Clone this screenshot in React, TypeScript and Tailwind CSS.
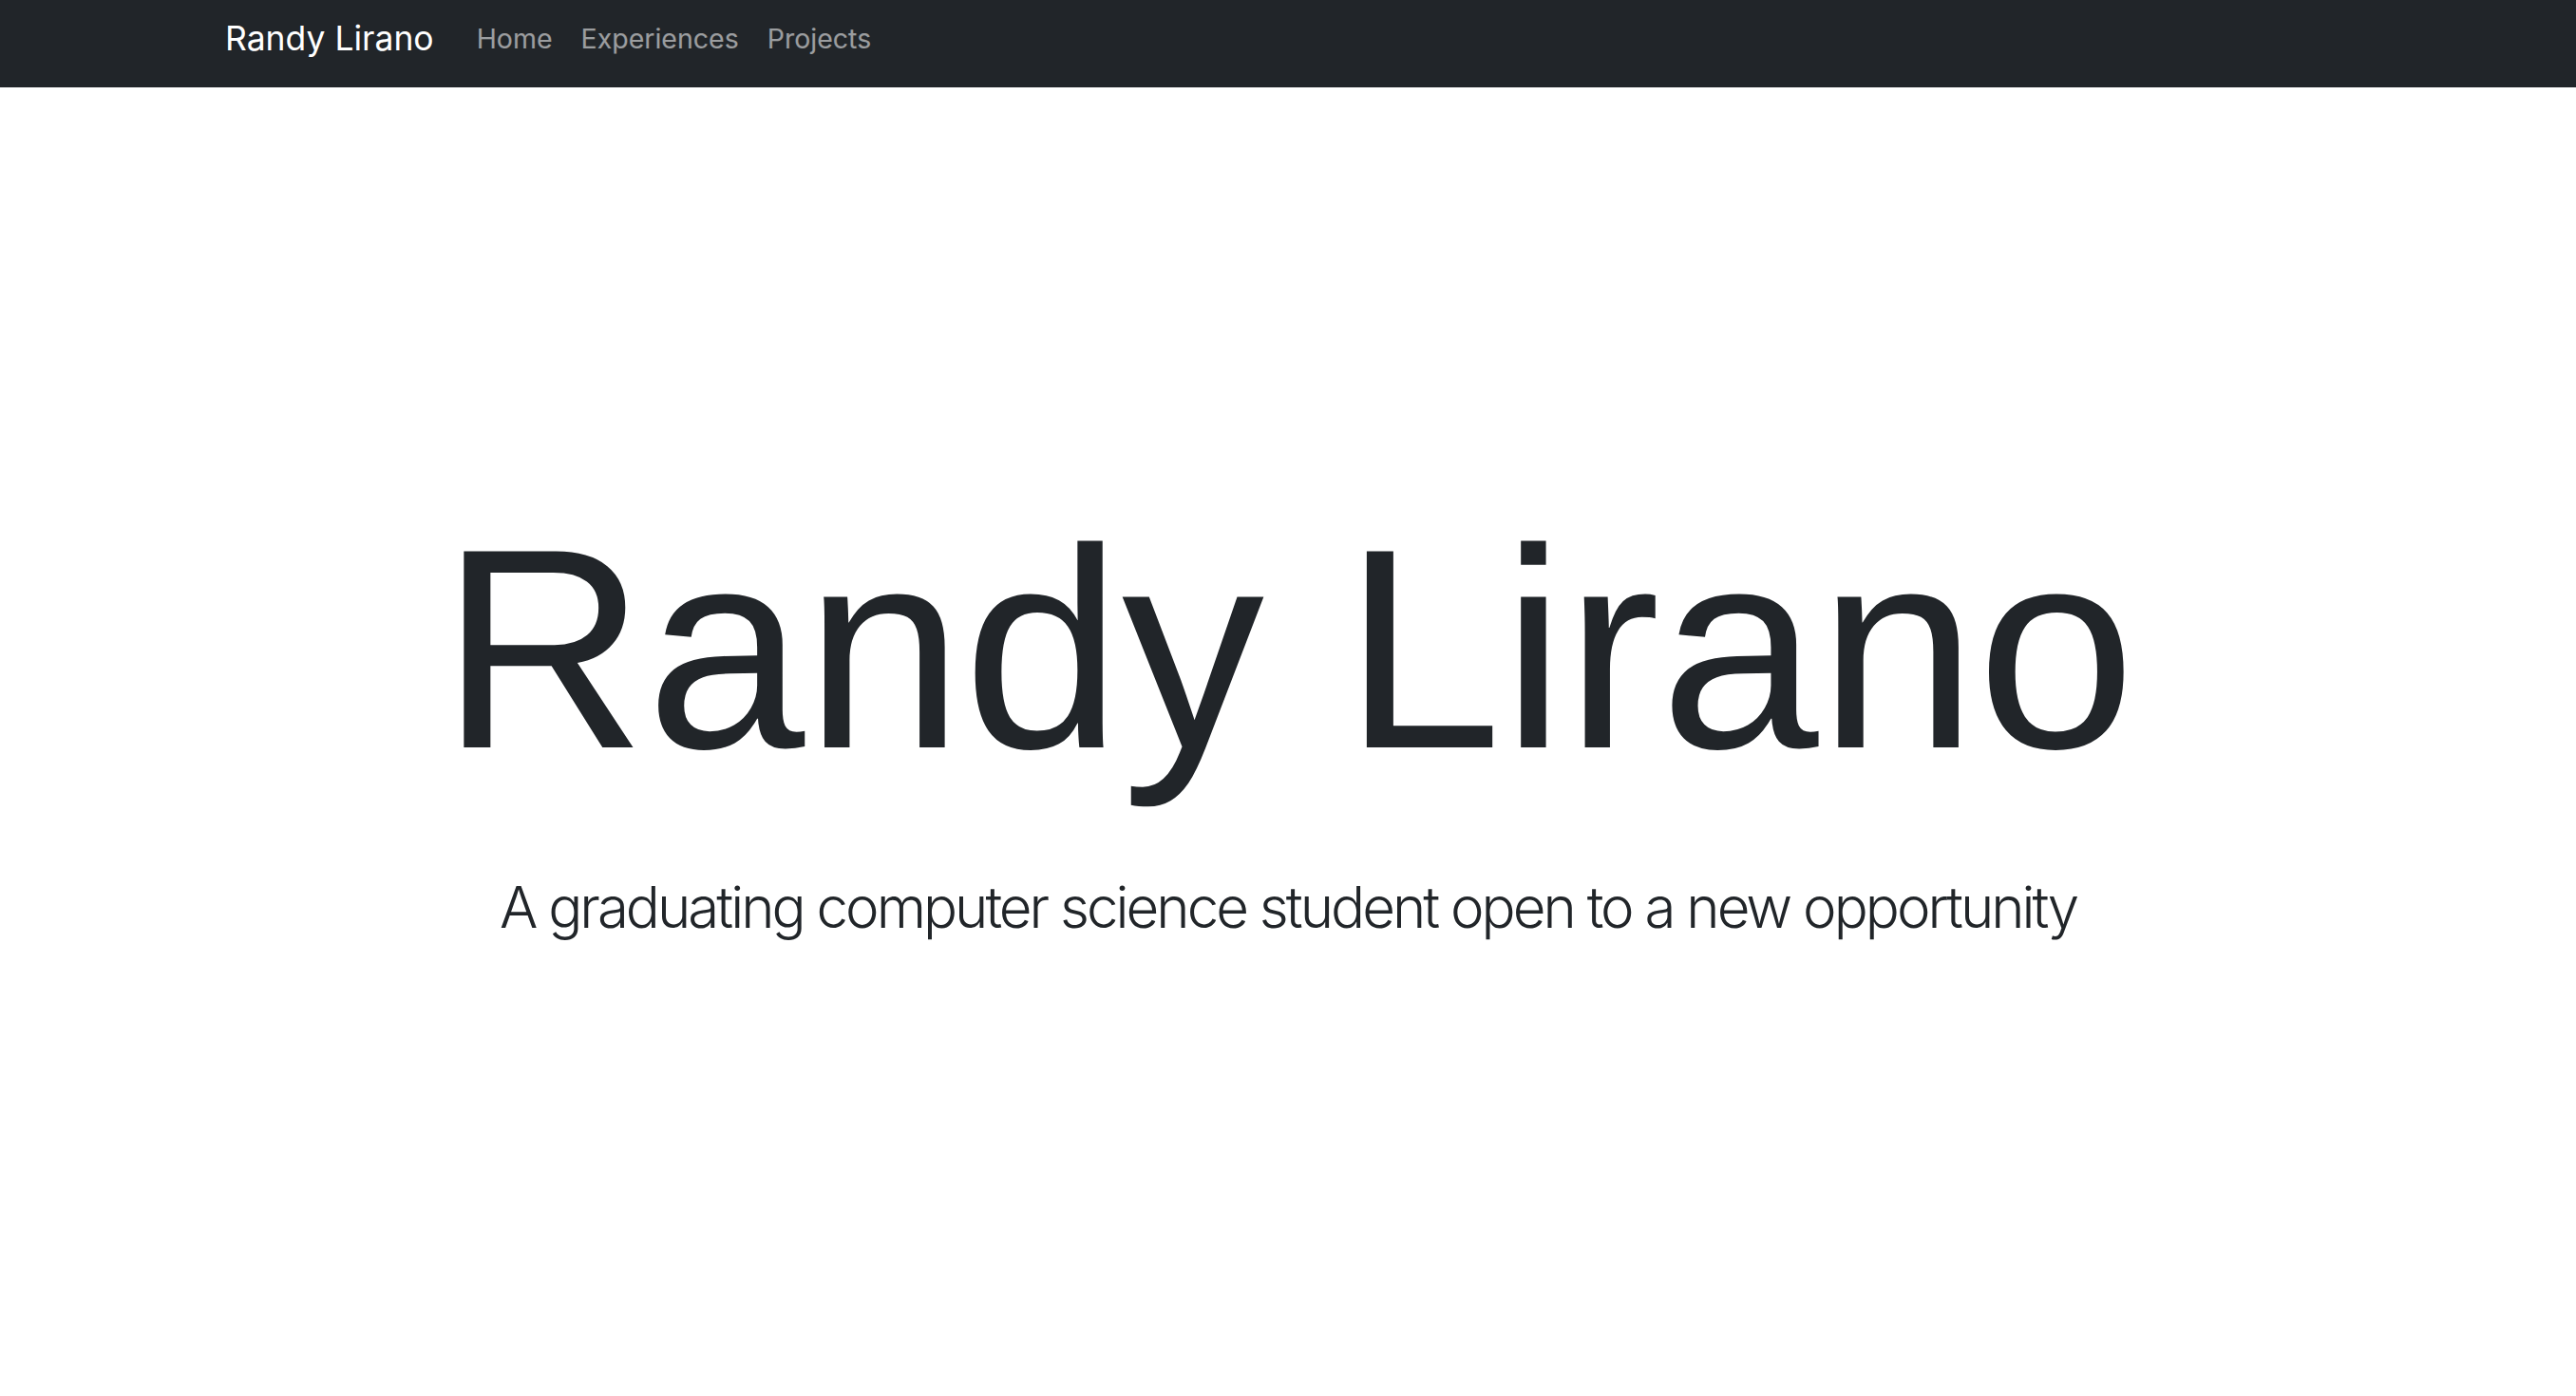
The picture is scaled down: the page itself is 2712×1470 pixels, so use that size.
import React from "react";

export default function App() {
  return (
    <div className="min-h-[1470px] bg-white" style={{ fontFamily: "Inter, 'Noto Sans', sans-serif" }}>
      <nav className="h-[92px] bg-[#212529] flex items-center">
        <div className="flex items-center pl-[237px] pb-[10px]">
          <span className="text-[35.5px] text-white mr-[45px] leading-none">Randy Lirano</span>
          <div className="flex items-center gap-[30px] text-[28.5px] text-white/55 leading-none">
            <span>Home</span>
            <span>Experiences</span>
            <span>Projects</span>
          </div>
        </div>
      </nav>
      <main className="flex flex-col items-center pt-[411px]">
        <h1
          className="text-[300px] leading-[1.2] text-[#212529] font-normal"
          style={{ fontFamily: "'Liberation Sans', Arial, sans-serif" }}
        >
          Randy Lirano
        </h1>
        <p className="mt-[47px] text-[60px] leading-[1.5] font-light text-[#212529] tracking-[-3px]">
          A graduating computer science student open to a new opportunity
        </p>
      </main>
    </div>
  );
}
